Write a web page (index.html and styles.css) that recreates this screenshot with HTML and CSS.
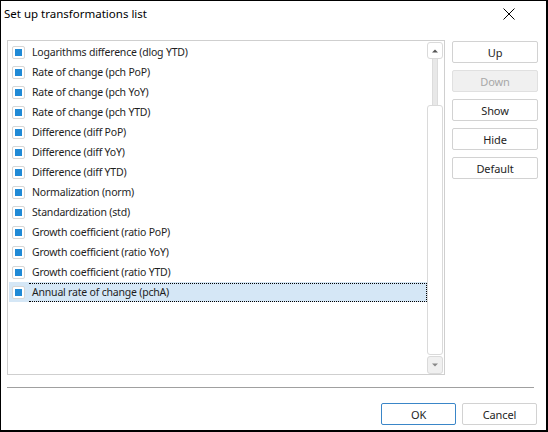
FILE: index.html
```html
<!DOCTYPE html>
<html>
<head>
<meta charset="utf-8">
<link rel="stylesheet" href="styles.css">
</head>
<body>
<div class="window">
  <div class="titlebar">
    <span class="title">Set up transformations list</span>
    <svg class="close" width="12" height="12" viewBox="0 0 12 12"><path d="M0.5 0.5 L11.5 11.5 M11.5 0.5 L0.5 11.5" stroke="#000" stroke-width="1" fill="none"/></svg>
  </div>
  <div class="main">
    <div class="listbox">
      <div class="items">
        <div class="row"><span class="cb"><span class="mark"></span></span><span class="label">Logarithms difference (dlog YTD)</span></div>
        <div class="row"><span class="cb"><span class="mark"></span></span><span class="label">Rate of change (pch PoP)</span></div>
        <div class="row"><span class="cb"><span class="mark"></span></span><span class="label">Rate of change (pch YoY)</span></div>
        <div class="row"><span class="cb"><span class="mark"></span></span><span class="label">Rate of change (pch YTD)</span></div>
        <div class="row"><span class="cb"><span class="mark"></span></span><span class="label">Difference (diff PoP)</span></div>
        <div class="row"><span class="cb"><span class="mark"></span></span><span class="label">Difference (diff YoY)</span></div>
        <div class="row"><span class="cb"><span class="mark"></span></span><span class="label">Difference (diff YTD)</span></div>
        <div class="row"><span class="cb"><span class="mark"></span></span><span class="label">Normalization (norm)</span></div>
        <div class="row"><span class="cb"><span class="mark"></span></span><span class="label">Standardization (std)</span></div>
        <div class="row"><span class="cb"><span class="mark"></span></span><span class="label">Growth coefficient (ratio PoP)</span></div>
        <div class="row"><span class="cb"><span class="mark"></span></span><span class="label">Growth coefficient (ratio YoY)</span></div>
        <div class="row"><span class="cb"><span class="mark"></span></span><span class="label">Growth coefficient (ratio YTD)</span></div>
        <div class="row selected"><span class="cb"><span class="mark"></span></span><span class="label">Annual rate of change (pchA)</span></div>
      </div>
      <div class="scrollbar">
        <div class="sbtn up"><svg width="6" height="4" viewBox="0 0 6 4"><path d="M0 3.5 L3 0.5 L6 3.5 Z" fill="#555"/></svg></div>
        <div class="thumb"></div>
        <div class="track"></div>
        <div class="sbtn down"><svg width="6" height="4" viewBox="0 0 6 4"><path d="M0 0.5 L3 3.5 L6 0.5 Z" fill="#888"/></svg></div>
      </div>
    </div>
    <div class="side">
      <div class="btn">Up</div>
      <div class="btn disabled">Down</div>
      <div class="btn">Show</div>
      <div class="btn">Hide</div>
      <div class="btn">Default</div>
    </div>
  </div>
  <div class="sep"></div>
  <div class="footer">
    <div class="btn wide default">OK</div>
    <div class="btn wide">Cancel</div>
  </div>
</div>
</body>
</html>
```
FILE: styles.css
```css
html, body {
  margin: 0;
  padding: 0;
  background: #fff;
}
.window {
  width: 548px;
  height: 432px;
  box-sizing: border-box;
  border-style: solid;
  border-color: #000;
  border-width: 1px 2px 2px 1px;
  background: #fff;
  font-family: "Noto Sans", "Open Sans", sans-serif;
  font-size: 10.5px;
  letter-spacing: -0.2px;
  color: #1e1e1e;
  display: flex;
  flex-direction: column;
}
.titlebar {
  height: 39px;
  display: flex;
  align-items: flex-start;
  justify-content: space-between;
  padding: 5px 0 0 3px;
  box-sizing: border-box;
  font-size: 11.5px;
  letter-spacing: 0;
  color: #000;
}
.title {
  line-height: 16px;
}
.close {
  margin: 2px 31px 0 0;
}
.main {
  display: flex;
  padding-left: 6px;
  height: 335px;
}
.listbox {
  width: 438px;
  height: 335px;
  box-sizing: border-box;
  border: 1px solid #cfcfcf;
  display: flex;
  padding: 1px 1px 0 1px;
}
.items {
  width: 418px;
}
.row {
  height: 20px;
  display: flex;
  align-items: center;
  box-sizing: border-box;
}
.row.selected {
  background: #d5e7f6;
}
.cb {
  width: 11px;
  height: 11px;
  border: 1px solid #d6d6d6;
  border-radius: 2px;
  margin: 0 0 0 3px;
  display: flex;
  align-items: center;
  justify-content: center;
  background: #fff;
}
.mark {
  width: 7px;
  height: 7px;
  background: #1f8ad6;
}
.label {
  margin-left: 7px;
  line-height: 18px;
}
.selected .label {
  flex: 1;
  height: 19px;
  box-sizing: border-box;
  border: 1px dotted #000;
  border-left: none;
  margin-left: 4px;
  padding-left: 3px;
  line-height: 17px;
}
.scrollbar {
  width: 16px;
  display: flex;
  flex-direction: column;
  align-items: center;
}
.sbtn {
  width: 16px;
  height: 17px;
  box-sizing: border-box;
  border: 1px solid #dadada;
  border-radius: 3px;
  display: flex;
  align-items: center;
  justify-content: center;
  background: #fff;
}
.sbtn.down {
  background: #f0f0f0;
  height: 18px;
  margin-top: 1px;
}
.thumb {
  width: 6px;
  height: 46px;
  background: #e8e8e8;
  border-left: 1px solid #dcdcdc;
  border-right: 1px solid #dcdcdc;
  box-sizing: border-box;
}
.track {
  width: 16px;
  flex: 1;
  box-sizing: border-box;
  border: 1px solid #dadada;
  border-radius: 3px;
  background: #fff;
}
.side {
  margin-left: 7px;
  display: flex;
  flex-direction: column;
  gap: 7px;
  padding-top: 1px;
}
.btn {
  width: 86px;
  height: 22px;
  box-sizing: border-box;
  border: 1px solid #d2d2d2;
  border-radius: 2px;
  background: #fff;
  display: flex;
  align-items: center;
  justify-content: center;
  color: #1e1e1e;
  font-size: 11px;
  letter-spacing: -0.1px;
}
.btn.disabled {
  background: #f0f0f0;
  border-color: #e0e0e0;
  color: #a8a8a8;
}
.sep {
  margin: 12px 12px 0 6px;
  height: 1px;
  background: #a0a0a0;
}
.footer {
  display: flex;
  justify-content: flex-end;
  gap: 6px;
  padding: 15px 9px 0 0;
}
.btn.wide {
  width: 75px;
}
.btn.default {
  border-color: #3a86c8;
}
```
